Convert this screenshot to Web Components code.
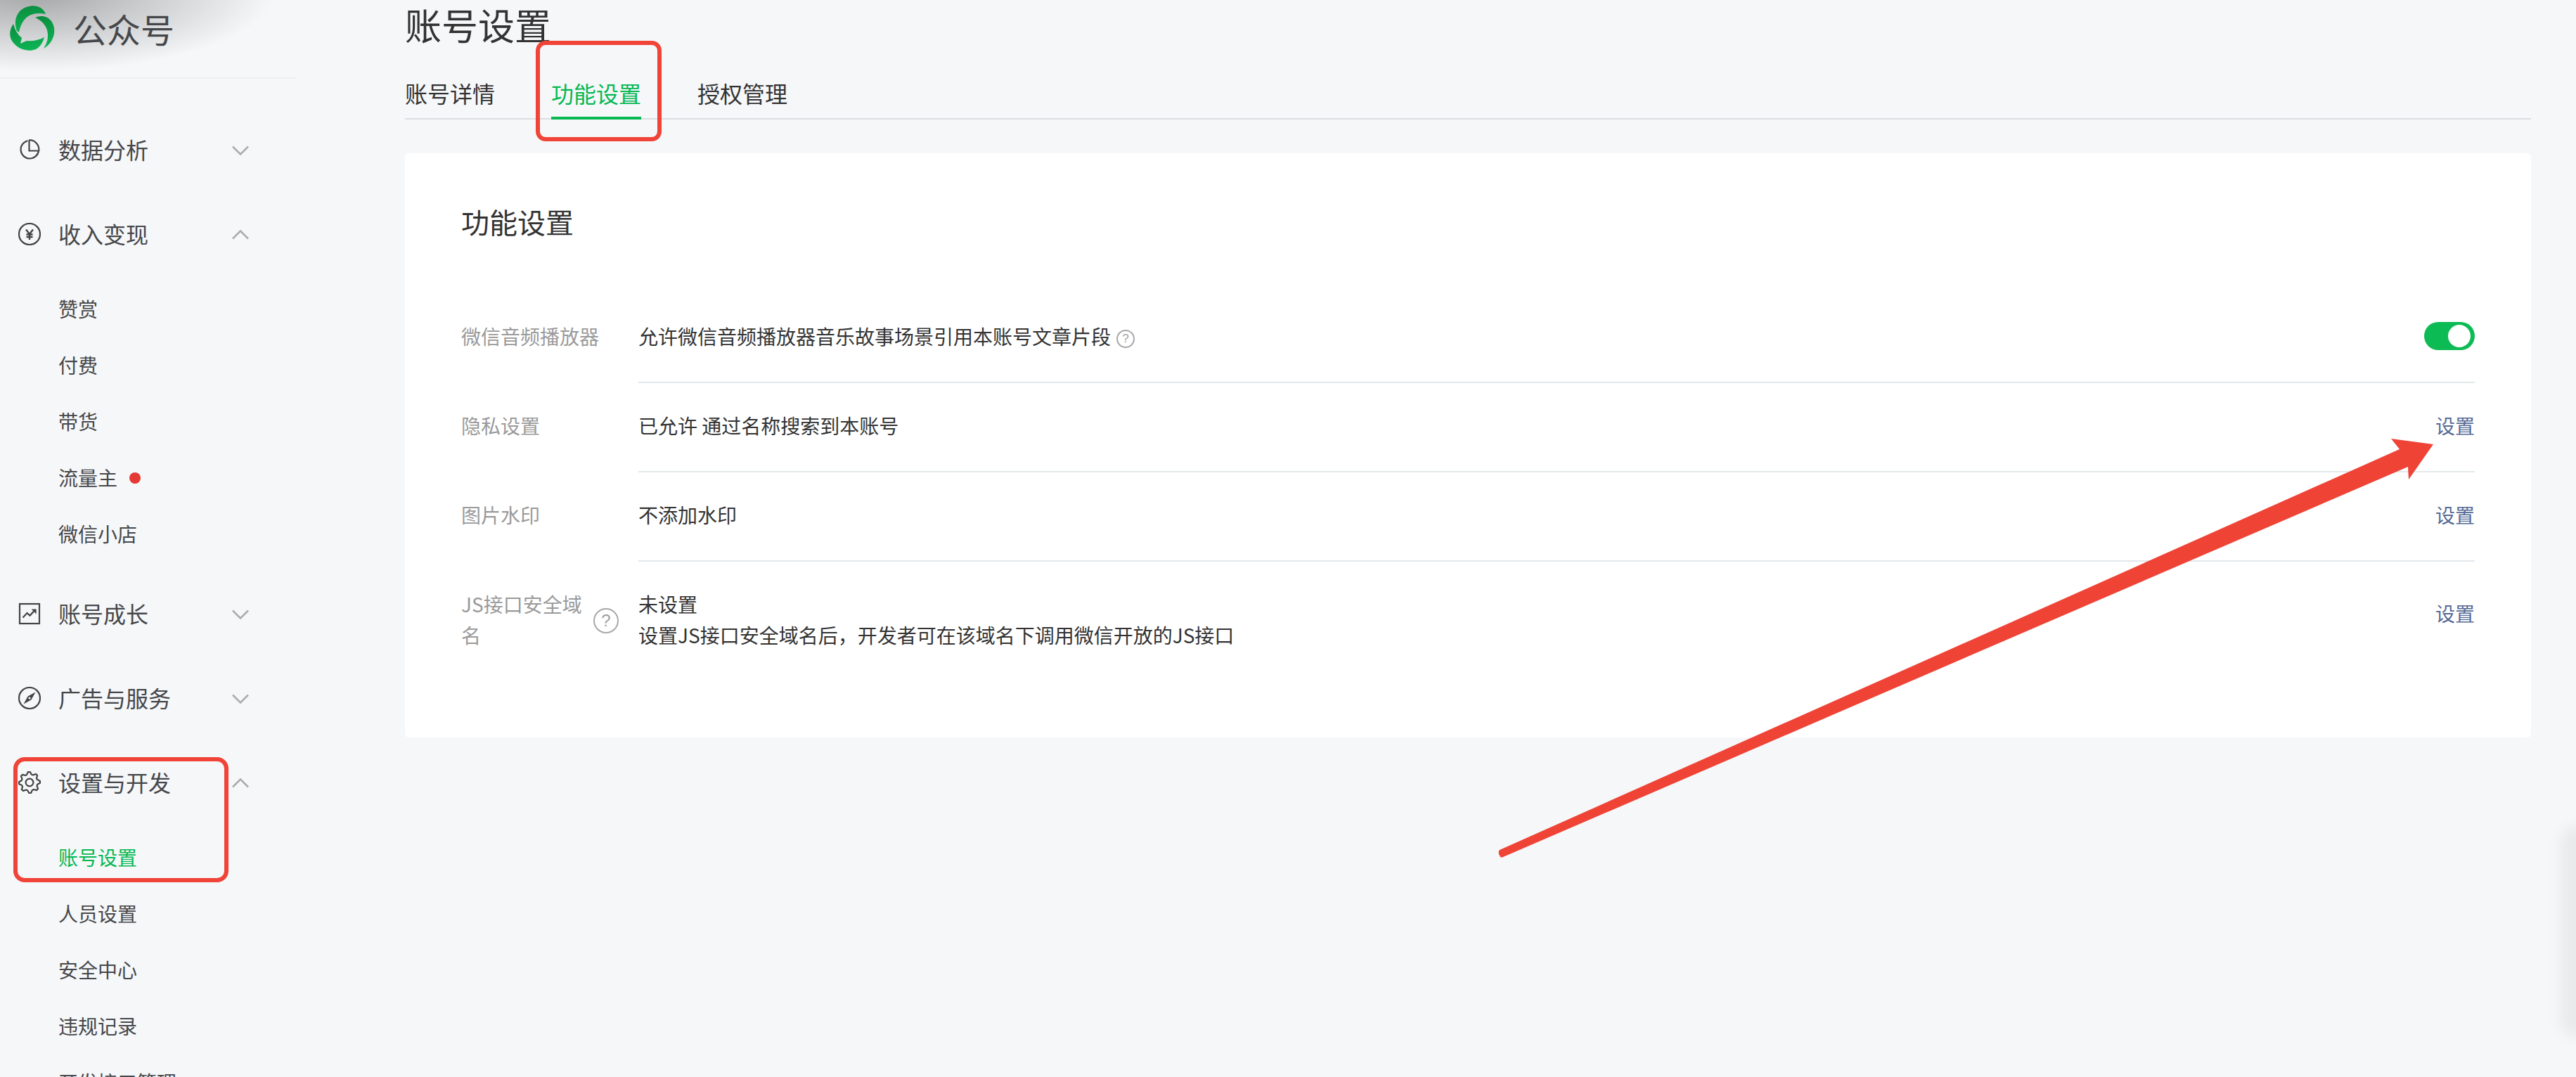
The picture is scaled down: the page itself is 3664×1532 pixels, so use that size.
<!DOCTYPE html>
<html lang="zh-CN">
<head>
<meta charset="utf-8">
<title>账号设置</title>
<style>
  html, body { margin: 0; padding: 0; height: 100%; overflow: hidden; background: #f6f7f9; }
  body { font-family: "Noto Sans CJK SC", "Noto Sans", sans-serif; color: #333; }
</style>
</head>
<body>
<wx-app>
  <wx-sidebar slot="side">
    <wx-nav-group icon="pie" title="数据分析"></wx-nav-group>
    <wx-nav-group icon="yen" title="收入变现" open>
      <wx-nav-item>赞赏</wx-nav-item>
      <wx-nav-item>付费</wx-nav-item>
      <wx-nav-item>带货</wx-nav-item>
      <wx-nav-item dot>流量主</wx-nav-item>
      <wx-nav-item>微信小店</wx-nav-item>
    </wx-nav-group>
    <wx-nav-group icon="growth" title="账号成长"></wx-nav-group>
    <wx-nav-group icon="compass" title="广告与服务"></wx-nav-group>
    <wx-nav-group icon="gear" title="设置与开发" open>
      <wx-nav-item active>账号设置</wx-nav-item>
      <wx-nav-item>人员设置</wx-nav-item>
      <wx-nav-item>安全中心</wx-nav-item>
      <wx-nav-item>违规记录</wx-nav-item>
      <wx-nav-item>开发接口管理</wx-nav-item>
    </wx-nav-group>
  </wx-sidebar>

  <wx-page-title>账号设置</wx-page-title>
  <wx-tabs>
    <wx-tab>账号详情</wx-tab>
    <wx-tab active>功能设置</wx-tab>
    <wx-tab>授权管理</wx-tab>
  </wx-tabs>
  <wx-card heading="功能设置">
    <wx-setting-row>
      <span slot="label">微信音频播放器</span>
      允许微信音频播放器音乐故事场景引用本账号文章片段<wx-help></wx-help>
      <wx-toggle slot="action" checked></wx-toggle>
    </wx-setting-row>
    <wx-setting-row>
      <span slot="label">隐私设置</span>
      已允许 通过名称搜索到本账号
      <wx-link slot="action">设置</wx-link>
    </wx-setting-row>
    <wx-setting-row>
      <span slot="label">图片水印</span>
      不添加水印
      <wx-link slot="action">设置</wx-link>
    </wx-setting-row>
    <wx-setting-row last>
      <span slot="label">JS接口安全域名</span>
      <wx-help slot="label-help" large></wx-help>
      未设置<br>设置JS接口安全域名后，开发者可在该域名下调用微信开放的JS接口
      <wx-link slot="action">设置</wx-link>
    </wx-setting-row>
  </wx-card>
</wx-app>
<wx-annotations></wx-annotations>

<script>
function gearPath() {
    // 8 teeth, round joins do the softening
    let d = "";
    for (let i = 0; i < 32; i++) {
        const a = (i / 32) * Math.PI * 2 - Math.PI / 2 - Math.PI / 32 * 1.5;
        const r = (i % 4 === 0 || i % 4 === 1) ? 15 : 11.6;
        const x = (16 + r * Math.cos(a)).toFixed(2);
        const y = (16 + r * Math.sin(a)).toFixed(2);
        d += (i === 0 ? "M" : "L") + x + " " + y;
    }
    return d + "Z";
}

const icons = {
    pie: `<path d="M13.5 3.2A12.8 12.8 0 1 0 29 17.5H15.5V2.2"/><path d="M15.5 2.2A13.8 13.8 0 0 1 29.3 17.5"/>`,
    yen: `<circle cx="16" cy="16" r="15"/><path d="M11 9.5l5 6.5 5-6.5M16 16v8M11.5 16.5h9M11.5 20h9" stroke-width="2.4"/>`,
    growth: `<rect x="2" y="2" width="28" height="28"/><path d="M6.5 21.5l6-6.5 4 3.6 8-8.6"/><path d="M18.6 9.4h7v7" fill="#444" stroke="none"/>`,
    compass: `<circle cx="16" cy="16" r="15"/><path d="M24.5 7.5L18.4 18.4 7.5 24.5 13.6 13.6Z" fill="#444" stroke="none"/><circle cx="16" cy="16" r="1.6" fill="#f6f7f9" stroke="none"/>`,
    gear: `<path d="${gearPath()}" stroke-linejoin="round"/><circle cx="16" cy="16" r="5.4"/>`
};

const appTemplate = document.createElement("template");
appTemplate.innerHTML = `
  <style>
    :host { display: flex; width: 3664px; height: 1532px; overflow: hidden; }
    main { flex: 1; min-width: 0; padding: 0 64px 0 154px; }
  </style>
  <slot name="side"></slot>
  <main><slot></slot></main>
`;

class WxApp extends HTMLElement {
    constructor() {
        super();
        this.attachShadow({mode: "open"});
        this.shadowRoot.appendChild(appTemplate.content.cloneNode(true));
    }
}

const sidebarTemplate = document.createElement("template");
sidebarTemplate.innerHTML = `
  <style>
    :host { display: block; width: 422px; flex: none; color: #45474a; }
    header {
      height: 110px; display: flex; align-items: flex-start;
      border-bottom: 2px solid #eceef0;
      background: radial-gradient(ellipse 340px 112px at 50px -10px, rgba(125,127,127,.68), rgba(125,127,127,.3) 55%, rgba(125,127,127,0) 100%);
    }
    svg { width: 64px; height: 64px; margin: 8px 0 0 14px; flex: none; overflow: visible; }
    h1 { margin: 7px 0 0 26px; font-size: 48px; line-height: 66px; font-weight: 400; color: #45474a; }
    nav { padding-top: 61px; }
  </style>
  <header>
    <svg viewBox="0 0 64 64">
      <defs>
        <linearGradient id="lg" x1="0" y1="0" x2="0.2" y2="1">
          <stop offset="0" stop-color="#0b8a3e"/>
          <stop offset="1" stop-color="#0cb353"/>
        </linearGradient>
      </defs>
      <g fill="url(#lg)">
        <path d="M10 36C4 20 11 3 30 .5 40 -.5 48 4 51 12 42 10 34 11 28 14 20 18 15 27 13 38Z"/>
        <path d="M36 17C44 13 54 15 59 22 67 33 64 52 48 61 54 52 56 42 52 32 49 25 43 20 36 17Z"/>
        <path d="M5 26C-1 34 -2 46 6 54 14 63 27 66 37 62 43 59 47 52 49 45 42 49 32 51 24 50L15 54 17 46C11 41 7 34 5 26Z"/>
      </g>
    </svg>
    <h1>公众号</h1>
  </header>
  <nav><slot></slot></nav>
`;

class WxSidebar extends HTMLElement {
    constructor() {
        super();
        this.attachShadow({mode: "open"});
        this.shadowRoot.appendChild(sidebarTemplate.content.cloneNode(true));
    }
}

const groupTemplate = document.createElement("template");
groupTemplate.innerHTML = `
  <style>
    :host { display: block; margin-bottom: 40px; }
    .title { display: flex; align-items: center; height: 80px; font-size: 32px; position: relative; }
    .text { padding-bottom: 3px; }
    .icon { width: 32px; height: 32px; margin-left: 26px; margin-right: 25px; flex: none; fill: none; stroke: #444; stroke-width: 2.2; }
    .chev { width: 24px; height: 14px; position: absolute; left: 330px; top: 34px; fill: none; stroke: #adadad; stroke-width: 2.6; }
    .subs { padding-top: 27px; margin-bottom: -7px; }
    :host(:not([open])) .subs { display: none; }
  </style>
  <div class="title">
    <svg class="icon" viewBox="0 0 32 32"></svg>
    <span class="text"></span>
    <svg class="chev" viewBox="0 0 24 14"><path d="M1 1.5l11 11 11-11"/></svg>
  </div>
  <div class="subs"><slot></slot></div>
`;

class WxNavGroup extends HTMLElement {
    constructor() {
        super();
        this.attachShadow({mode: "open"});
        this.shadowRoot.appendChild(groupTemplate.content.cloneNode(true));
    }

    connectedCallback() {
        const root = this.shadowRoot;
        root.querySelector(".icon").innerHTML = icons[this.getAttribute("icon")];
        root.querySelector(".text").textContent = this.getAttribute("title");
        this.removeAttribute("title");
        if (this.hasAttribute("open")) {
            root.querySelector(".chev path").setAttribute("d", "M1 12.5l11-11 11 11");
        }
    }
}

const itemTemplate = document.createElement("template");
itemTemplate.innerHTML = `
  <style>
    :host { display: flex; align-items: center; height: 80px; box-sizing: border-box; padding: 0 0 2px 83px; font-size: 28px; color: #45474a; }
    :host([active]) { color: #07b853; }
    i { display: none; width: 16px; height: 16px; border-radius: 50%; background: #e53935; margin: 2px 0 0 17px; }
    :host([dot]) i { display: block; }
  </style>
  <slot></slot><i></i>
`;

class WxNavItem extends HTMLElement {
    constructor() {
        super();
        this.attachShadow({mode: "open"});
        this.shadowRoot.appendChild(itemTemplate.content.cloneNode(true));
    }
}

const titleTemplate = document.createElement("template");
titleTemplate.innerHTML = `
  <style>
    :host { display: block; font-size: 52px; line-height: 70px; color: #333; }
  </style>
  <slot></slot>
`;

class WxPageTitle extends HTMLElement {
    constructor() {
        super();
        this.attachShadow({mode: "open"});
        this.shadowRoot.appendChild(titleTemplate.content.cloneNode(true));
    }
}

const tabsTemplate = document.createElement("template");
tabsTemplate.innerHTML = `
  <style>
    :host { display: flex; gap: 80px; margin-top: 41px; height: 57px; border-bottom: 2px solid #dcdee1; }
  </style>
  <slot></slot>
`;

class WxTabs extends HTMLElement {
    constructor() {
        super();
        this.attachShadow({mode: "open"});
        this.shadowRoot.appendChild(tabsTemplate.content.cloneNode(true));
    }
}

const tabTemplate = document.createElement("template");
tabTemplate.innerHTML = `
  <style>
    :host { display: block; height: 59px; box-sizing: border-box; font-size: 32px; line-height: 42px; color: #333; }
    :host([active]) { color: #07b853; border-bottom: 4px solid #07b853; }
  </style>
  <slot></slot>
`;

class WxTab extends HTMLElement {
    constructor() {
        super();
        this.attachShadow({mode: "open"});
        this.shadowRoot.appendChild(tabTemplate.content.cloneNode(true));
    }
}

const cardTemplate = document.createElement("template");
cardTemplate.innerHTML = `
  <style>
    :host { display: block; margin-top: 48px; padding: 69px 80px 79px; background: #fff; border-radius: 6px; }
    h2 { margin: 0 0 75px; font-size: 40px; line-height: 56px; font-weight: 400; color: #333; }
  </style>
  <h2></h2>
  <slot></slot>
`;

class WxCard extends HTMLElement {
    constructor() {
        super();
        this.attachShadow({mode: "open"});
        this.shadowRoot.appendChild(cardTemplate.content.cloneNode(true));
    }

    connectedCallback() {
        this.shadowRoot.querySelector("h2").textContent = this.getAttribute("heading");
    }
}

const rowTemplate = document.createElement("template");
rowTemplate.innerHTML = `
  <style>
    :host { display: flex; font-size: 28px; line-height: 44px; color: #333; }
    .label { width: 252px; flex: none; display: flex; align-items: center; align-self: flex-start; padding-top: 38px; color: #9a9a9a; }
    .label-text { width: 196px; margin-right: -8px; flex: none; }
    .body { flex: 1; min-width: 0; display: flex; justify-content: space-between; align-items: center; padding: 38px 0 43px; border-bottom: 2px solid #e4e8eb; }
    :host([last]) .body { border-bottom: none; padding-bottom: 45px; }
    :host([last]) ::slotted([slot="action"]) { margin-top: -18px; }
  </style>
  <div class="label"><div class="label-text"><slot name="label"></slot></div><slot name="label-help"></slot></div>
  <div class="body">
    <div><slot></slot></div>
    <slot name="action"></slot>
  </div>
`;

class WxSettingRow extends HTMLElement {
    constructor() {
        super();
        this.attachShadow({mode: "open"});
        this.shadowRoot.appendChild(rowTemplate.content.cloneNode(true));
    }
}

const helpTemplate = document.createElement("template");
helpTemplate.innerHTML = `
  <style>
    :host {
      display: inline-block; width: 22px; height: 22px; margin-left: 8px; vertical-align: 3px;
      border: 2px solid #a8a8a8; border-radius: 50%; color: #a0a0a0;
      font: 17px/22px "Liberation Sans", sans-serif; text-align: center;
    }
    :host([large]) { width: 32px; height: 32px; margin: 4px 0 0; font-size: 24px; line-height: 32px; }
  </style>
  ?
`;

class WxHelp extends HTMLElement {
    constructor() {
        super();
        this.attachShadow({mode: "open"});
        this.shadowRoot.appendChild(helpTemplate.content.cloneNode(true));
    }
}

const toggleTemplate = document.createElement("template");
toggleTemplate.innerHTML = `
  <style>
    :host { display: flex; justify-content: flex-end; align-items: center; width: 72px; height: 40px; box-sizing: border-box; padding-right: 6px; border-radius: 20px; background: #0dbb55; }
    i { display: block; width: 32px; height: 32px; border-radius: 50%; background: #fff; }
  </style>
  <i></i>
`;

class WxToggle extends HTMLElement {
    constructor() {
        super();
        this.attachShadow({mode: "open"});
        this.shadowRoot.appendChild(toggleTemplate.content.cloneNode(true));
    }
}

const linkTemplate = document.createElement("template");
linkTemplate.innerHTML = `
  <style>
    :host { display: block; color: #576b95; font-size: 28px; }
  </style>
  <slot></slot>
`;

class WxLink extends HTMLElement {
    constructor() {
        super();
        this.attachShadow({mode: "open"});
        this.shadowRoot.appendChild(linkTemplate.content.cloneNode(true));
    }
}

// red marks drawn over the screenshot, plus the faint shadow at the right edge
const annotationsTemplate = document.createElement("template");
annotationsTemplate.innerHTML = `
  <style>
    :host { position: absolute; left: 0; top: 0; width: 3664px; height: 1532px; pointer-events: none; }
    svg { display: block; }
  </style>
  <svg width="3664" height="1532" viewBox="0 0 3664 1532">
    <defs><filter id="soft" x="-50%" y="-20%" width="200%" height="140%"><feGaussianBlur stdDeviation="9"/></filter></defs>
    <rect x="3642" y="1175" width="60" height="300" rx="24" fill="#000" fill-opacity=".05" filter="url(#soft)"/>
    <rect x="765" y="61" width="173" height="137" rx="11" fill="none" stroke="#f04438" stroke-width="6"/>
    <rect x="22" y="1080" width="300" height="172" rx="13" fill="none" stroke="#f04438" stroke-width="6"/>
    <path d="M3461 632L3401 624 3413 639 2133 1209Q2131 1211 2132 1215L2134 1219Q2136 1220 2138 1219L3425 664 3426 682Z" fill="#ef4336"/>
  </svg>
`;

class WxAnnotations extends HTMLElement {
    constructor() {
        super();
        this.attachShadow({mode: "open"});
        this.shadowRoot.appendChild(annotationsTemplate.content.cloneNode(true));
    }
}

customElements.define("wx-app", WxApp);
customElements.define("wx-sidebar", WxSidebar);
customElements.define("wx-nav-group", WxNavGroup);
customElements.define("wx-nav-item", WxNavItem);
customElements.define("wx-page-title", WxPageTitle);
customElements.define("wx-tabs", WxTabs);
customElements.define("wx-tab", WxTab);
customElements.define("wx-card", WxCard);
customElements.define("wx-setting-row", WxSettingRow);
customElements.define("wx-help", WxHelp);
customElements.define("wx-toggle", WxToggle);
customElements.define("wx-link", WxLink);
customElements.define("wx-annotations", WxAnnotations);
</script>
</body>
</html>
